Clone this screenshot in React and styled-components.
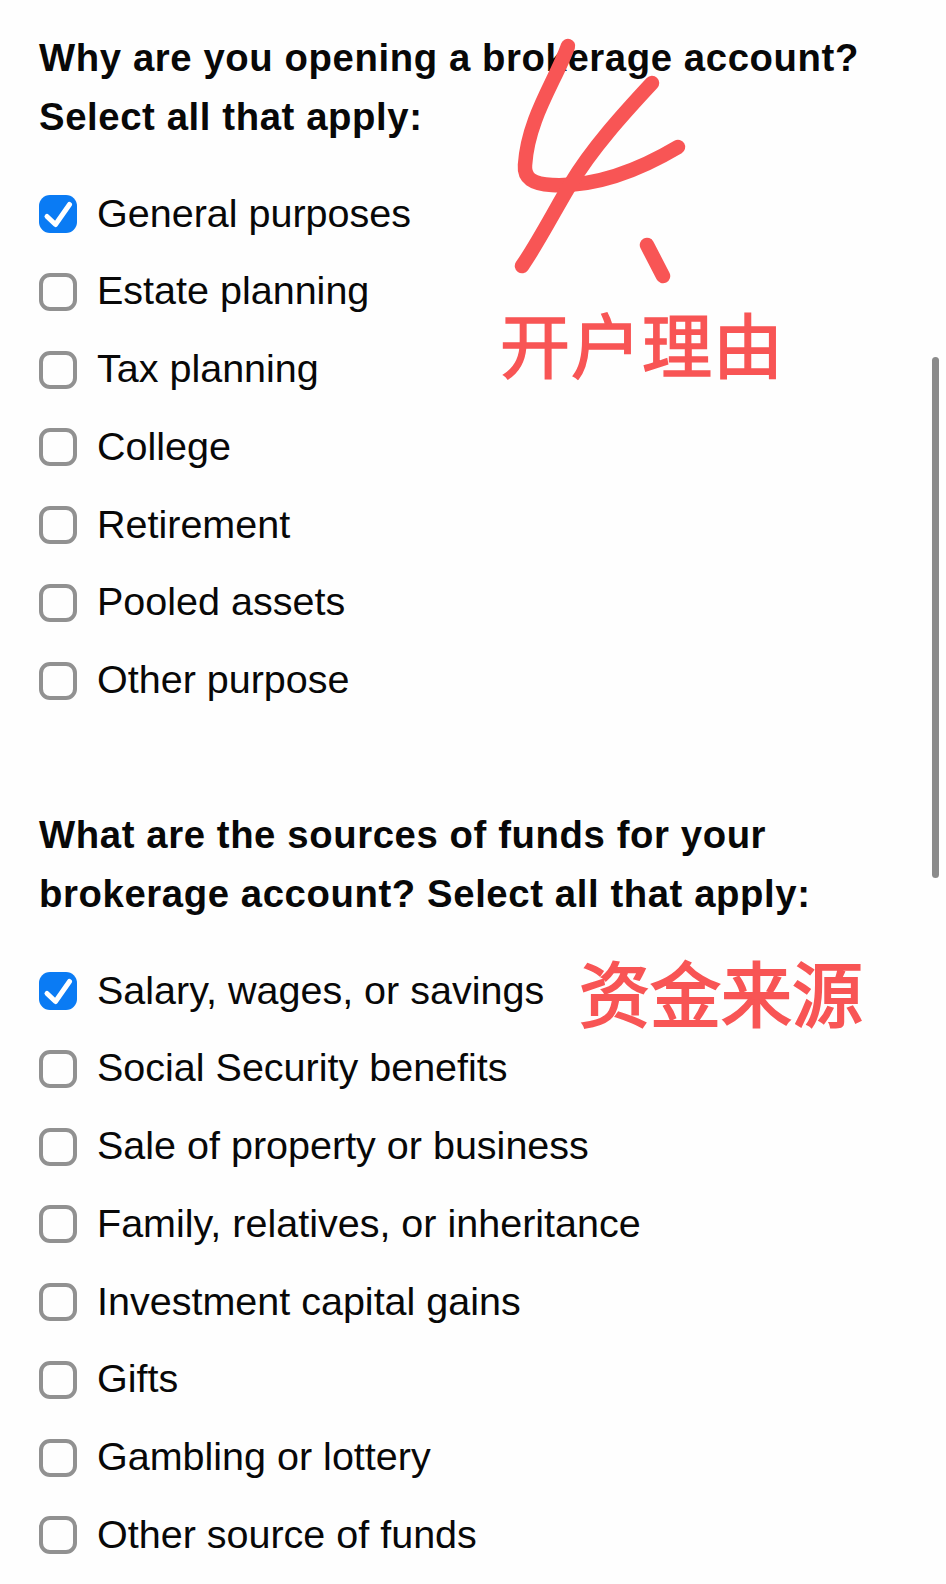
import React from 'react';
import styled, { createGlobalStyle } from 'styled-components';

const GlobalStyle = createGlobalStyle`
  html, body {
    margin: 0;
    padding: 0;
    background: #fefefe;
  }
`;

const Page = styled.div`
  position: relative;
  width: 946px;
  height: 1584px;
  overflow: hidden;
  padding: 29px 0 0 39px;
  box-sizing: border-box;
  background: #fefefe;
  color: #080808;
  font-family: "Liberation Sans", Arial, sans-serif;
`;

const Section = styled.section`
  margin-bottom: 99.5px;
`;

const Heading = styled.h2`
  margin: 0 0 42px;
  font-size: 38.3px;
  line-height: 58.5px;
  font-weight: 700;
  letter-spacing: 0.6px;
  white-space: nowrap;
`;

const Options = styled.div`
  display: flex;
  flex-direction: column;
  gap: 25.75px;
`;

const Row = styled.label`
  display: flex;
  align-items: center;
  gap: 20px;
  height: 52px;
  font-size: 39.5px;
`;

const Box = styled.span`
  width: 38px;
  height: 38px;
  box-sizing: border-box;
  border-radius: 11px;
  display: flex;
  align-items: center;
  justify-content: center;
  flex: none;
  background: ${(p) => (p.$checked ? '#0a7bf4' : '#fefefe')};
  border: ${(p) => (p.$checked ? 'none' : '4px solid #919191')};
`;

const Label = styled.span`
  margin-bottom: 2px;
`;

const Scrollbar = styled.div`
  position: absolute;
  left: 932px;
  top: 357px;
  width: 7px;
  height: 521px;
  border-radius: 4px;
  background: #8b8b8b;
`;

const Scribble = styled.svg`
  position: absolute;
  left: 500px;
  top: 30px;
  width: 200px;
  height: 260px;
`;

const Note = styled.div`
  position: absolute;
  left: ${(p) => p.$left}px;
  top: ${(p) => p.$top}px;
  font-family: "Noto Sans CJK SC", sans-serif;
  font-size: ${(p) => p.$size}px;
  letter-spacing: ${(p) => p.$spacing}px;
  -webkit-text-stroke: ${(p) => p.$stroke}px #f85555;
  line-height: 1;
  font-weight: 400;
  color: #f85555;
  white-space: nowrap;
`;

const Check = () => (
  <svg width="38" height="38" viewBox="0 0 38 38" fill="none">
    <path d="M8 21.5 L16.5 29.5 L30.5 9.5" stroke="#fff" strokeWidth="5" strokeLinecap="round" strokeLinejoin="round" />
  </svg>
);

const purposes = ['General purposes', 'Estate planning', 'Tax planning', 'College', 'Retirement', 'Pooled assets', 'Other purpose'];
const sources = [
  'Salary, wages, or savings',
  'Social Security benefits',
  'Sale of property or business',
  'Family, relatives, or inheritance',
  'Investment capital gains',
  'Gifts',
  'Gambling or lottery',
  'Other source of funds',
];

const Group = ({ title, items }) => (
  <Section>
    <Heading>
      {title[0]}
      <br />
      {title[1]}
    </Heading>
    <Options>
      {items.map((item, i) => (
        <Row key={item}>
          <Box $checked={i === 0}>{i === 0 && <Check />}</Box>
          <Label>{item}</Label>
        </Row>
      ))}
    </Options>
  </Section>
);

const App = () => (
  <Page>
    <GlobalStyle />
    <Group title={['Why are you opening a brokerage account?', 'Select all that apply:']} items={purposes} />
    <Group title={['What are the sources of funds for your', 'brokerage account? Select all that apply:']} items={sources} />

    <Scribble viewBox="500 30 200 260" fill="none" stroke="#f85555" strokeWidth="14.5" strokeLinecap="round" strokeLinejoin="round">
      <path d="M568 46 C556 80 528 118 525 165 C524 178 532 184 552 185 C595 187 636 172 678 147" />
      <path d="M652 83 C625 112 592 148 570 185 C556 208 538 243 522 266" />
      <path d="M647 245 L663 276" />
    </Scribble>
    <Note $left={500} $top={308} $size={70} $spacing={1} $stroke={1.6}>开户理由</Note>
    <Note $left={579} $top={955} $size={71} $spacing={0} $stroke={2}>资金来源</Note>
    <Scrollbar />
  </Page>
);

export default App;
